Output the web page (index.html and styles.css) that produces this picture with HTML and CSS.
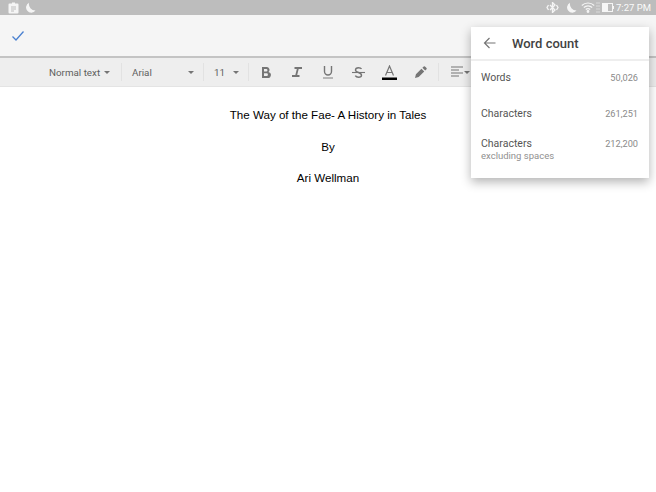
FILE: index.html

```html
<!DOCTYPE html>
<html lang="en">
<head>
  <meta charset="UTF-8" />
  <title>Word count</title>
  <link rel="stylesheet" href="styles.css">
</head>
<body>
  <div class="status-bar">
    <div class="status-left">
      <svg width="11" height="12" viewBox="0 0 11 12"><path d="M1.500 1.500h2.500V.5h3v1h2.500q1 0 1 1v8q0 1-1 1h-8q-1 0-1-1v-8q0-1 1-1z" fill="#f5f5f5"/><path d="M3 5h5M3 7h5M3 9h3" stroke="#bdbdbd" stroke-width="1"/></svg>
      <svg width="11" height="12" viewBox="0 0 11 12"><path d="M4 .8a5.200 5.200 0 1 0 6.500 7.700A6.500 6.500 0 0 1 4 .8z" fill="#f5f5f5"/></svg>
    </div>
    <div class="status-right">
      <svg class="vibrate" width="13" height="11" viewBox="0 0 13 11" fill="none" stroke="#f5f5f5" stroke-width="1.300"><path d="M4 3l5 5-2.500 2.500V.5L9 3 4 8"/><path d="M2.500 3L1 5.500 2.500 8M10.500 3L12 5.500 10.500 8"/></svg>
      <svg class="moon" width="11" height="12" viewBox="0 0 11 12"><path d="M4 .8a5.200 5.200 0 1 0 6.500 7.700A6.500 6.500 0 0 1 4 .8z" fill="#f5f5f5"/></svg>
      <svg class="wifi" width="14" height="11" viewBox="0 0 14 11" fill="none" stroke="#f5f5f5" stroke-width="1.200"><path d="M.8 3.500a9 9 0 0 1 12.400 0M2.800 5.500a6 6 0 0 1 8.400 0M4.800 7.500a3 3 0 0 1 4.400 0"/><circle cx="7" cy="9.500" r=".8" fill="#f5f5f5"/></svg>
      <svg class="signal" width="4" height="11" viewBox="0 0 4 11"><path d="M0 1h4M0 4h4M0 7h4M0 10h4" stroke="#d0d0d0" stroke-width="1.500"/></svg>
      <svg class="battery" width="12" height="9" viewBox="0 0 12 9"><rect x=".5" y=".5" width="10" height="8" fill="none" stroke="#f5f5f5"/><rect x="1" y="1" width="5" height="7" fill="#f5f5f5"/><rect x="11" y="3" width="1" height="3" fill="#f5f5f5"/></svg>
      <span class="clock">7:27 PM</span>
    </div>
  </div>

  <div class="action-bar">
    <svg width="12" height="10" viewBox="0 0 12 10" fill="none"><path d="M.5 5.500l3.500 3.500 7.500-8.500" stroke="#4a80d0" stroke-width="1.300"/></svg>
  </div>

  <div class="toolbar">
    <span class="tool-select style-select">Normal text <i class="caret"></i></span>
    <span class="divider"></span>
    <span class="tool-select font-select">Arial <i class="caret"></i></span>
    <span class="divider"></span>
    <span class="tool-select size-select">11 <i class="caret"></i></span>
    <span class="divider"></span>
    <div class="format-icons">
      <svg width="10" height="11" viewBox="0 0 10 11" fill="#757575" fill-rule="evenodd"><path d="M1 0h4.500a2.800 2.800 0 0 1 2 4.900A3 3 0 0 1 6 11H1zM3 2v2.500h2.200a1.250 1.250 0 0 0 0-2.500zM3 6.300V9h2.600a1.350 1.350 0 0 0 0-2.700z"/></svg>
      <svg width="10" height="10" viewBox="0 0 10 10" fill="none" stroke="#757575" stroke-width="1.800"><path d="M2.500 1H10M0 9h7.500M6 1L4 9"/></svg>
      <svg width="10" height="13" viewBox="0 0 10 13" fill="none" stroke="#757575" stroke-width="1.400"><path d="M1.500 0v5.500a3.500 3.500 0 0 0 7 0V0"/><path d="M0 12h10" stroke="#9e9e9e"/></svg>
      <svg width="13" height="11" viewBox="0 0 13 11" fill="none" stroke="#757575" stroke-width="1.400"><path d="M9.500 2Q8.800.8 6.500.8 3.500.8 3.500 3 3.500 4.500 6.500 5.500q3 1 3 2.700 0 2-3 2-2.300 0-3.200-1.500"/><path d="M0 5.500h13" stroke-width="1.100"/></svg>
      <svg class="color-icon" width="15" height="15" viewBox="0 0 15 15"><path d="M3.500 10.500L7.500 1l4 9.500M5 7.500h5" fill="none" stroke="#757575" stroke-width="1.200"/><rect x="0" y="12.500" width="15" height="2.500" fill="#000"/></svg>
      <svg width="12" height="12" viewBox="0 0 13 13"><path d="M0 13l1-4 6-6 3 3-6 6zM8 2l1.500-1.500q.7-.5 1.300 0l1.700 1.700q.5.600 0 1.300L11 5z" fill="#757575"/></svg>
    </div>
    <span class="divider"></span>
    <span class="align-tool">
      <svg width="12" height="12" viewBox="0 0 12 12" fill="none" stroke="#757575" stroke-width="1.100"><path d="M0 1h12M0 4h8M0 7h12M0 10h8"/></svg>
      <i class="caret"></i>
    </span>
  </div>

  <main class="doc">
    <p>The Way of the Fae- A History in Tales</p>
    <p>By</p>
    <p>Ari Wellman</p>
  </main>

  <aside class="panel">
    <div class="panel-head">
      <svg width="13" height="12" viewBox="0 0 13 12" fill="none" stroke="#757575" stroke-width="1.200"><path d="M12.500 6H1.500M6.500 1l-5 5 5 5"/></svg>
      <h2>Word count</h2>
    </div>
    <div class="count-row row-words"><span class="label">Words</span><span class="value">50,026</span></div>
    <div class="count-row row-chars"><span class="label">Characters</span><span class="value">261,251</span></div>
    <div class="count-row row-nospace">
      <div><span class="label">Characters</span><small>excluding spaces</small></div>
      <span class="value">212,200</span>
    </div>
  </aside>
</body>
</html>
```

FILE: styles.css

```css
body {
  font-family: Roboto, "Liberation Sans", sans-serif;
  margin: 0;
  height: 492px;
  overflow: hidden;
  position: relative;
  background: white;
}
.status-bar {
  height: 15px;
  background: #bdbdbd;
  display: flex;
  justify-content: space-between;
  align-items: center;
  padding: 0 5px 0 8px;
}
.status-left, .status-right {
  display: flex;
  align-items: center;
}
.status-left {
  gap: 6px;
}
.status-right .vibrate {
  margin-right: 7px;
}
.status-right .moon {
  margin-right: 4px;
}
.status-right .wifi {
  margin-right: 1px;
}
.status-right .signal {
  margin-right: 2px;
}
.status-right .battery {
  margin-right: 2px;
}
.clock {
  color: #fafafa;
  font-size: 9.500px;
}
.action-bar {
  height: 41px;
  background: #f5f5f5;
  border-bottom: 2px solid #c4c4c4;
  display: flex;
  align-items: center;
  padding-left: 12px;
}
.toolbar {
  height: 28px;
  background: #eeeeee;
  border-bottom: 1px solid #e4e4e4;
  display: flex;
  align-items: center;
  color: #5f5f5f;
  font-size: 9.800px;
}
.tool-select {
  display: flex;
  align-items: center;
  justify-content: space-between;
  box-sizing: border-box;
}
.style-select {
  width: 121px;
  padding: 0 11px 0 49px;
}
.font-select {
  width: 81px;
  padding: 0 9px 0 10px;
}
.size-select {
  width: 44px;
  padding: 0 9px 0 10px;
}
.caret {
  width: 0;
  height: 0;
  border-left: 3.500px solid transparent;
  border-right: 3.500px solid transparent;
  border-top: 3.500px solid #757575;
}
.divider {
  width: 1px;
  height: 18px;
  background: #e2e2e2;
}
.format-icons {
  width: 189px;
  display: grid;
  grid-template-columns: repeat(6, 31px);
  justify-items: center;
  align-items: center;
  padding-left: 1px;
  box-sizing: border-box;
}
.align-tool {
  display: flex;
  align-items: center;
  gap: 1px;
  margin-left: 12px;
}
.doc {
  width: 656px;
  text-align: center;
  font-family: "Liberation Sans", Arial, sans-serif;
  font-size: 11.600px;
  color: #000;
  padding-top: 21px;
}
.doc p {
  margin: 0 0 17.500px;
  line-height: 14px;
}
.panel {
  position: absolute;
  left: 471px;
  top: 27px;
  width: 178px;
  height: 151px;
  background: white;
  box-shadow: 0 4px 10px rgba(0,0,0,0.3);
  color: #555;
}
.panel-head {
  height: 32px;
  display: flex;
  align-items: center;
  gap: 16px;
  padding-left: 12px;
  border-bottom: 2px solid #eeeeee;
}
.panel-head h2 {
  margin: 0;
  font-size: 13px;
  font-weight: 500;
  color: #424242;
}
.count-row {
  display: flex;
  justify-content: space-between;
  align-items: flex-start;
  padding: 0 11px 0 10px;
  font-size: 10.500px;
}
.row-words {
  margin-top: 10px;
}
.row-chars {
  margin-top: 23px;
}
.row-nospace {
  margin-top: 17px;
}
.label {
  display: block;
  color: #555;
  line-height: 13px;
}
.value {
  color: #8a8a8a;
  font-size: 9.200px;
  line-height: 13px;
}
small {
  display: block;
  color: #909090;
  font-size: 9.500px;
  line-height: 12px;
}
```
